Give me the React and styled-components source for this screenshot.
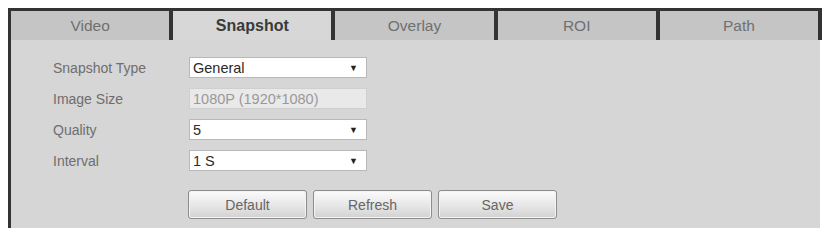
import React from "react";
import styled, { createGlobalStyle } from "styled-components";

const GlobalStyle = createGlobalStyle`
  body {
    margin: 0;
    background: #ffffff;
    font-family: "Liberation Sans", Arial, sans-serif;
  }
`;

const Panel = styled.div`
  margin: 8px 0 0 8px;
  width: 814px;
  border-left: 3px solid #333;
  box-sizing: border-box;
`;

const TabBar = styled.div`
  display: flex;
  border-top: 3px solid #333;
`;

const Tab = styled.div`
  flex: 1;
  height: 29px;
  display: flex;
  align-items: center;
  justify-content: center;
  border-right: 4px solid #333;
  background: ${props => (props.active ? "#d7d7d7" : "#c5c5c5")};
  color: ${props => (props.active ? "#3a3a3a" : "#707070")};
  font-weight: ${props => (props.active ? "bold" : "normal")};
  font-size: ${props => (props.active ? "16px" : "15.5px")};
`;

const Body = styled.div`
  background: #d6d6d6;
  height: 188px;
  margin-right: 2px;
  padding: 17px 0 0 42px;
  box-sizing: border-box;
`;

const Form = styled.div`
  display: grid;
  grid-template-columns: 136px 178px;
  grid-auto-rows: 21px;
  row-gap: 10px;
  align-items: center;
`;

const Label = styled.div`
  color: #6e6e6e;
  font-size: 14px;
`;

const Field = styled.div`
  height: 21px;
  box-sizing: border-box;
  display: flex;
  align-items: center;
  justify-content: space-between;
  padding: 0 8px 0 3px;
  border: 1px solid ${props => (props.disabled ? "#cfcfcf" : "#b8b8b8")};
  background: ${props => (props.disabled ? "#e9e9e9" : "#ffffff")};
  color: ${props => (props.disabled ? "#999" : "#2a2a2a")};
  font-size: 14.5px;
`;

const Arrow = styled.span`
  font-size: 9px;
  color: #222;
`;

const Buttons = styled.div`
  display: flex;
  gap: 6px;
  margin: 19px 0 0 135px;
`;

const Button = styled.button`
  width: 119px;
  height: 29px;
  border: 1px solid #8c8c8c;
  border-radius: 3px;
  background: linear-gradient(#fbfbfb, #e6e6e6 55%, #d2d2d2);
  box-shadow: inset 0 0 0 1px #f4f4f4;
  color: #666;
  font-family: "Liberation Sans", Arial, sans-serif;
  font-size: 14px;
  padding: 0;
`;

const Select = ({ value }) => (
  <Field>
    <span>{value}</span>
    <Arrow>▼</Arrow>
  </Field>
);

export default function App() {
  const tabs = ["Video", "Snapshot", "Overlay", "ROI", "Path"];
  return (
    <>
      <GlobalStyle />
      <Panel>
        <TabBar>
          {tabs.map(t => (
            <Tab key={t} active={t === "Snapshot"}>
              {t}
            </Tab>
          ))}
        </TabBar>
        <Body>
          <Form>
            <Label>Snapshot Type</Label>
            <Select value="General" />
            <Label>Image Size</Label>
            <Field disabled>1080P (1920*1080)</Field>
            <Label>Quality</Label>
            <Select value="5" />
            <Label>Interval</Label>
            <Select value="1 S" />
          </Form>
          <Buttons>
            <Button>Default</Button>
            <Button>Refresh</Button>
            <Button>Save</Button>
          </Buttons>
        </Body>
      </Panel>
    </>
  );
}
